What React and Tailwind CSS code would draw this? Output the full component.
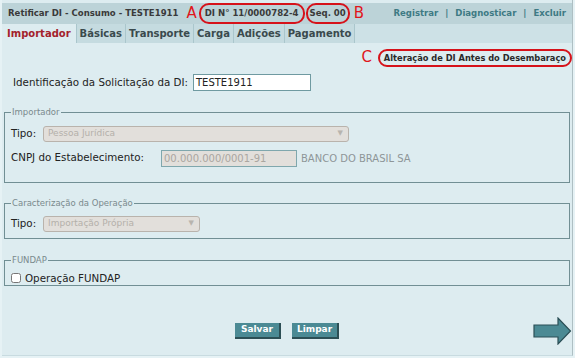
import { useState } from "react";

const tabs = ["Importador", "Básicas", "Transporte", "Carga", "Adições", "Pagamento"];

function Arrow() {
  return (
    <svg width="39" height="28" viewBox="0 0 39 28">
      <path d="M1 8 H25 V1 L37.5 14 L25 27 V20 H1 Z" fill="#4b8a94" stroke="#2b4f56" strokeWidth="1.2" />
    </svg>
  );
}

function SelectBox({ width, value }) {
  return (
    <div
      className={`flex h-[16px] ${width} items-center justify-between rounded-[3px] border border-[#b9b3ac] bg-[#e2dfdb] pl-[4px] pr-[5px] text-[9px] text-[#b4b0aa]`}
    >
      <span>{value}</span>
      <span className="text-[7px] text-[#b8b4ae]">▼</span>
    </div>
  );
}

export default function App() {
  const [fundap, setFundap] = useState(false);

  return (
    <div className="relative h-[358px] w-[575px] overflow-hidden bg-[#e6f2f5] font-['DejaVu_Sans',Verdana,sans-serif] text-[#222]">
      <div className="ml-[2px] mr-[2px] flex h-[356px] flex-col border-r border-[#aebfc3] border-b border-b-[#c8dbe0] bg-[#ddecf0]">
        {/* title bar */}
        <div className="mt-[3px] flex h-[21px] items-center whitespace-nowrap bg-[#bcd3d8] pl-[6px] pr-[6px] font-['DejaVu_Sans_Condensed',sans-serif] text-[9.5px] font-bold text-[#3a3a3a]">
          <span>Retificar DI - Consumo - TESTE1911</span>
          <span className="ml-[8px] font-['DejaVu_Sans',sans-serif] text-[15px] font-normal leading-none text-[#e0161c]">A</span>
          <span className="ml-[2px] rounded-[10px] border-2 border-[#d6121a] px-[4px] py-[1px]">DI N° 11/0000782-4</span>
          <span className="ml-[1px] rounded-[10px] border-2 border-[#d6121a] px-[2px] py-[1px]">Seq. 00</span>
          <span className="ml-[4px] font-['DejaVu_Sans',sans-serif] text-[15px] font-normal leading-none text-[#e0161c]">B</span>
          <span className="ml-auto text-[#3e7a84]">
            Registrar <span className="mx-[4px]">|</span> Diagnosticar <span className="mx-[4px]">|</span> Excluir
          </span>
        </div>

        {/* tabs */}
        <div className="flex h-[19px] whitespace-nowrap bg-[#cde1e6] text-[10px] font-bold">
          {tabs.map((tab, i) => (
            <div
              key={tab}
              className={
                i === 0
                  ? "flex items-center bg-[#ddecf0] px-[5px] text-[#a3212b]"
                  : "flex items-center border-l border-[#aac6cc] bg-[#c5dbe0] px-[3px] text-[#3a4a4d]"
              }
            >
              {tab}
            </div>
          ))}
          <div className="border-l border-[#aac6cc]" />
        </div>

        {/* annotation C */}
        <div className="mt-[6px] flex items-center justify-end whitespace-nowrap">
          <span className="mr-[6px] text-[15px] leading-none text-[#e0161c]">C</span>
          <span className="rounded-[10px] border-2 border-[#d6121a] px-[4px] font-['DejaVu_Sans_Condensed',sans-serif] text-[9.2px] font-bold text-[#2a2a2a]">
            Alteração de DI Antes do Desembaraço
          </span>
        </div>

        {/* identificação */}
        <div className="ml-[11px] mt-[7px] flex items-center text-[10.3px]">
          <span>Identificação da Solicitação da DI:</span>
          <div className="ml-[5px] flex h-[17px] w-[118px] items-center border border-[#6f9aa1] bg-white pl-[2px] text-[10px]">
            TESTE1911
          </div>
        </div>

        {/* importador */}
        <fieldset className="mx-[2px] mt-[15px] h-[77px] border border-[#718f94] px-[6px]">
          <legend className="px-[1px] text-[8.5px] text-[#7a8a8d]">Importador</legend>
          <div className="mt-[7px] flex items-center text-[10.3px]">
            <span className="w-[32px]">Tipo:</span>
            <SelectBox width="w-[306px]" value="Pessoa Jurídica" />
          </div>
          <div className="mt-[8px] flex items-center text-[10.3px]">
            <span className="w-[150px]">CNPJ do Estabelecimento:</span>
            <div className="flex h-[17px] w-[136px] items-center border border-[#7fa7ad] bg-[#e2dfdb] pl-[2px] text-[10px] text-[#aaa6a0]">
              00.000.000/0001-91
            </div>
            <span className="ml-[4px] text-[10px] text-[#8e9698]">BANCO DO BRASIL SA</span>
          </div>
        </fieldset>

        {/* caracterização */}
        <fieldset className="mx-[2px] mt-[14px] h-[42px] border border-[#718f94] px-[6px]">
          <legend className="px-[1px] text-[8.5px] text-[#7a8a8d]">Caracterização da Operação</legend>
          <div className="mt-[6px] flex items-center text-[10.3px]">
            <span className="w-[32px]">Tipo:</span>
            <SelectBox width="w-[157px]" value="Importação Própria" />
          </div>
        </fieldset>

        {/* fundap */}
        <fieldset className="mx-[2px] mt-[15px] h-[32px] border border-[#718f94] px-[6px]">
          <legend className="px-[1px] text-[8.5px] text-[#7a8a8d]">FUNDAP</legend>
          <label className="mt-[4px] flex items-center gap-[4px] text-[10.3px]">
            <input
              type="checkbox"
              checked={fundap}
              onChange={(e) => setFundap(e.target.checked)}
              className="h-[10px] w-[10px]"
            />
            Operação FUNDAP
          </label>
        </fieldset>

        {/* actions */}
        <div className="relative mt-[37px] flex justify-center gap-[11px]">
          <button className="h-[16px] border-r-2 border-b-2 border-[#2c4f55] bg-[#4b8a94] px-[6px] text-[9px] font-bold text-white">
            Salvar
          </button>
          <button className="h-[16px] border-r-2 border-b-2 border-[#2c4f55] bg-[#4b8a94] px-[5px] text-[9px] font-bold text-white">
            Limpar
          </button>
          <div className="absolute right-[0px] top-[-6px]">
            <Arrow />
          </div>
        </div>
      </div>
    </div>
  );
}
